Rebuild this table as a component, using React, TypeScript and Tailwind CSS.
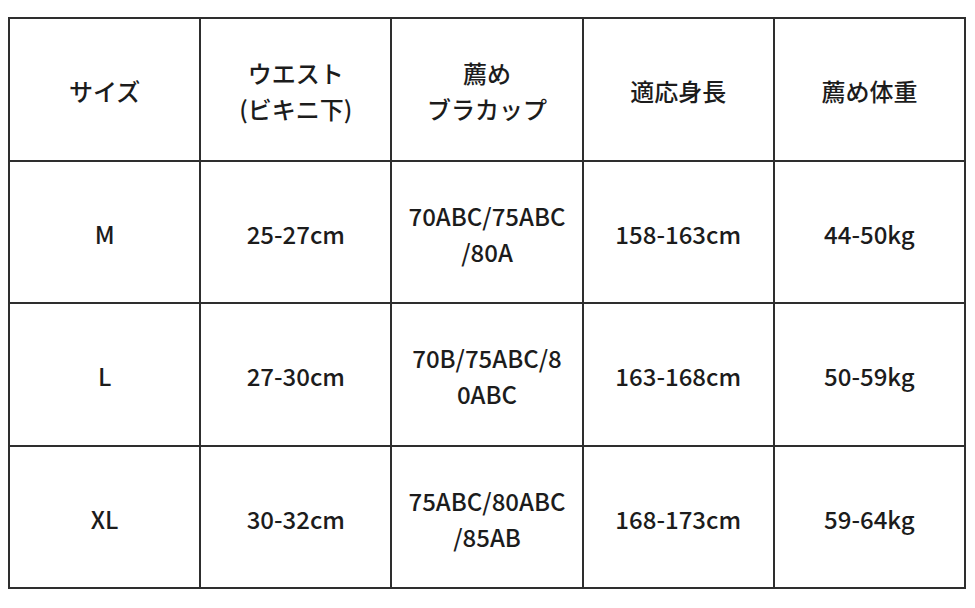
import React from "react";

const rows: React.ReactNode[][] = [
  [
    "サイズ",
    <>ウエスト<br />(ビキニ下)</>,
    <>薦め<br />ブラカップ</>,
    "適応身長",
    "薦め体重",
  ],
  ["M", "25-27cm", <>70ABC/75ABC<br />/80A</>, "158-163cm", "44-50kg"],
  ["L", "27-30cm", <>70B/75ABC/8<br />0ABC</>, "163-168cm", "50-59kg"],
  ["XL", "30-32cm", <>75ABC/80ABC<br />/85AB</>, "168-173cm", "59-64kg"],
];

export default function App() {
  return (
    <div className="w-[975px] h-[608px] bg-white pt-[17px] pl-[8px]">
      <div
        className="w-[958px] h-[572px] bg-[#2e2e2e] p-[2px] grid grid-cols-5 grid-rows-4 gap-[2px] text-[24px] font-medium leading-[36px] text-[#1c1c1c]"
        style={{ fontFamily: '"Noto Sans CJK JP", "Noto Sans", sans-serif' }}
      >
        {rows.flatMap((r, i) =>
          r.map((c, j) => (
            <div
              key={`${i}-${j}`}
              className="bg-white flex items-center justify-center text-center pt-[4px]"
            >
              <div>{c}</div>
            </div>
          ))
        )}
      </div>
    </div>
  );
}
